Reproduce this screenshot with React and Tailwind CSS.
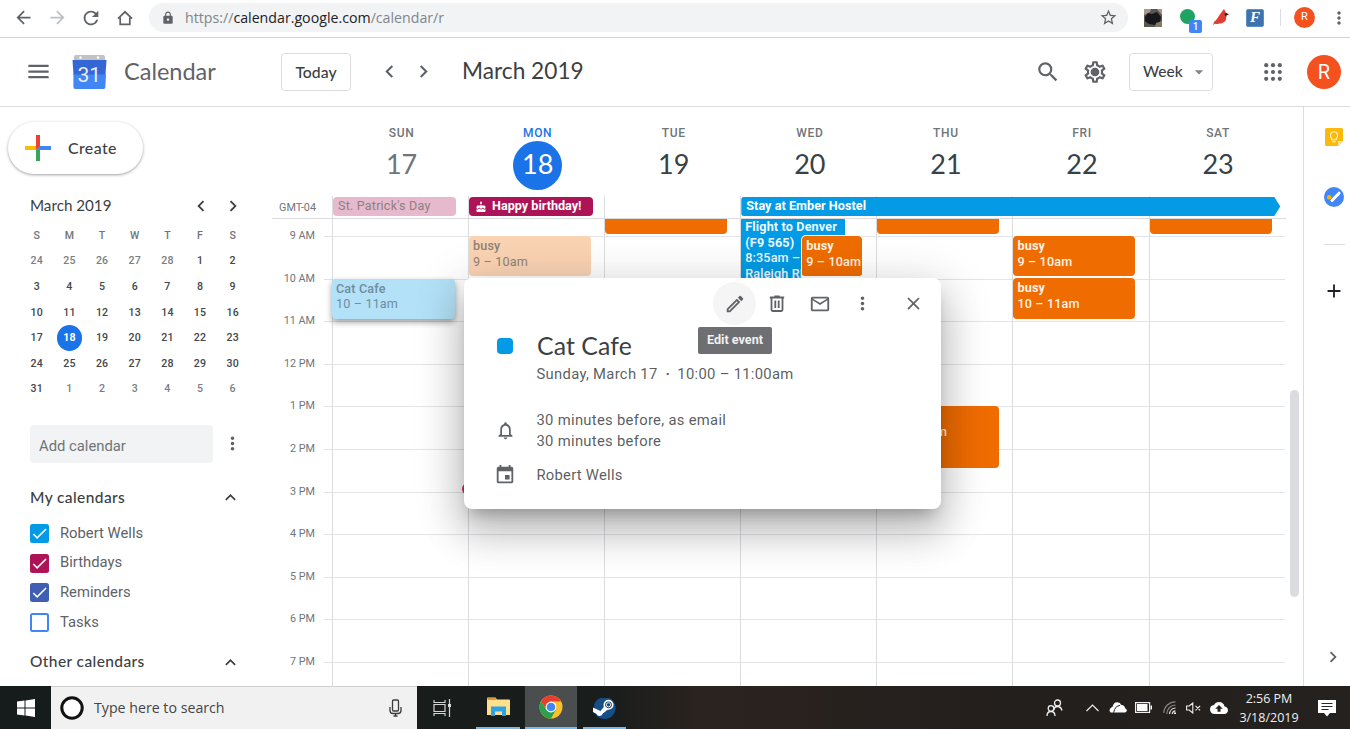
import React from "react";
import {
  MdAdd, MdArrowBack, MdArrowDropDown, MdArrowForward, MdCake, MdCheck,
  MdChevronLeft, MdChevronRight, MdClose, MdEvent, MdExpandLess, MdLock, MdMailOutline,
  MdMenu, MdMoreVert, MdNotificationsNone, MdOutlineModeEdit, MdOutlineSettings,
  MdRefresh, MdSearch, MdStarBorder, MdCloudUpload,
} from "react-icons/md";

const display = "font-['Lato',sans-serif]";
const system = "font-['Open_Sans','Noto_Sans',sans-serif]";

function Box({ w, children, className = "" }) {
  return <div className={`flex shrink-0 items-center justify-center ${w} ${className}`}>{children}</div>;
}

function BrowserBar() {
  return (
    <div className="flex h-[38px] shrink-0 items-start border-b border-[#cfd1d3] bg-white text-[#5f6368]">
      <div className="flex h-[35px] w-full items-center">
        <div className="w-[6px]" />
        <Box w="w-[34px]"><MdArrowBack size={21} /></Box>
        <Box w="w-[34px]" className="text-[#bdc1c6]"><MdArrowForward size={21} /></Box>
        <Box w="w-[34px]"><MdRefresh size={22} /></Box>
        <Box w="w-[34px]">
          <svg width="16" height="16" viewBox="0 0 16 16" fill="none" stroke="currentColor" strokeWidth="1.7">
            <path d="M1 8.6 8 1.8l7 6.8M3.2 7.4v7h9.6v-7" />
          </svg>
        </Box>
        <div className="ml-[7px] flex h-[29px] w-[979px] shrink-0 items-center rounded-full bg-[#f1f3f4]">
          <MdLock size={14} className="ml-3" />
          <div className={`ml-[10px] text-[14.200px] ${system} text-[#80868b]`}>
            https://<span className="text-[#202124]">calendar.google.com</span>/calendar/r
          </div>
          <MdStarBorder size={19} className="mr-[10px] ml-auto" />
        </div>
        <Box w="w-[50px]">
          <svg width="18" height="18" viewBox="0 0 18 18">
            <rect width="18" height="18" fill="#5c5650" />
            <path d="M0 0h7l-1 3-6 3zM13 0h5v6z" fill="#a79a8a" />
            <path d="M1 8 4 4l4 1 5-2 4 5-1 5-5 3-6-1-4-3z" fill="#16181b" />
            <path d="M12 14l6-2v6h-7z" fill="#85796a" />
          </svg>
        </Box>
        <div className="relative ml-[2px] h-[35px] w-[24px] shrink-0">
          <div className="mt-[9px] size-[15px] rounded-full bg-[#1da462]" />
          <div className="absolute top-[20px] left-[9px] flex h-[13px] w-[13px] items-center justify-center rounded-[2px] bg-[#4285f4] text-[10px] font-medium text-white">1</div>
        </div>
        <Box w="w-[34px]">
          <svg width="17" height="17" viewBox="0 0 17 17">
            <path d="M10 1.2 11 0l1.600 3.200 3.400 2.300-2.600 1-.5 4.600C11.600 14 6.500 15.500 2 14.800L0 16l1.200-3.400C4 11 5.800 6.500 10 1.200z" fill="#e23b30" />
            <path d="m11.300 4.800 2.200-.6 2 1.500-2.100.4-.3 2z" fill="#2a1a1a" />
          </svg>
        </Box>
        <Box w="w-[34px]">
          <div className="flex size-[18px] items-center justify-center rounded-[2px] border border-[#5f8fc0] bg-[#3d74ad] font-['Liberation_Serif',serif] text-[15px] font-bold text-white italic">F</div>
        </Box>
        <div className="ml-[8px] h-[17px] w-px shrink-0 bg-[#dadce0]" />
        <Box w="w-[47px]"><div className="flex size-[21px] items-center justify-center rounded-full bg-[#f4511e] text-[11px] text-white">R</div></Box>
        <Box w="w-[22px]"><MdMoreVert size={20} className="shrink-0" /></Box>
      </div>
    </div>
  );
}

function Header() {
  return (
    <div className="flex h-[69px] shrink-0 items-center border-b border-[#dadce0] pb-px text-[#5f6368]">
      <Box w="w-[76px]"><MdMenu size={27} /></Box>
      <svg className="-ml-[4px]" width="35" height="36" viewBox="0 0 35 36">
        <path d="M2 6V3a2 2 0 0 1 2-2h27a2 2 0 0 1 2 2v3z" fill="#c2c2c2" />
        <circle cx="8.500" cy="3.500" r="1.200" fill="#fff" /><circle cx="26" cy="3.500" r="1.200" fill="#fff" />
        <path d="M.5 6h34l-1 15h-32z" fill="#3367d6" />
        <path d="M1.400 20.500 34 20.500l-.6 12.500a2 2 0 0 1-2 2h-28a2 2 0 0 1-2-2z" fill="#4285f4" />
        <text x="17.300" y="27.500" textAnchor="middle" fontFamily="Roboto" fontSize="21" fill="#e8edf8">31</text>
      </svg>
      <div className={`ml-[17px] w-[157px] text-[23.500px] ${display}`}>Calendar</div>
      <div className={`flex h-[38px] w-[70px] shrink-0 items-center justify-center rounded-[4px] border border-[#dadce0] text-[15.800px] font-medium text-[#3c4043] ${display}`}>Today</div>
      <Box w="w-[34px]" className="ml-[21px]"><MdChevronLeft size={25} /></Box>
      <Box w="w-[34px]"><MdChevronRight size={25} /></Box>
      <div className={`ml-[22px] text-[22.700px] text-[#3c4043] ${display}`}>March 2019</div>
      <div className="grow" />
      <Box w="w-[47px]"><MdSearch size={26} /></Box>
      <Box w="w-[48px]">
        <svg width="26" height="26" viewBox="0 0 26 26">
          <MdOutlineSettings size={26} x="0" y="0" />
          <circle cx="13" cy="13" r="3.400" fill="currentColor" />
        </svg>
      </Box>
      <div className={`ml-[10px] flex h-[38px] w-[84px] items-center rounded-[4px] border border-[#dadce0] pl-[13px] text-[15.500px] font-medium text-[#3c4043] ${display}`}>
        Week<MdArrowDropDown size={20} className="mr-[3px] ml-auto text-[#80868b]" />
      </div>
      <Box w="w-[48px]" className="ml-[36px]">
        <svg width="18" height="18" viewBox="0 0 18 18" fill="currentColor">
          {[2.200, 9, 15.800].map((y) => [2.200, 9, 15.800].map((x) => <circle key={`${x}-${y}`} cx={x} cy={y} r="2.100" />))}
        </svg>
      </Box>
      <div className="mr-[9px] ml-[10px] flex size-[34px] items-center justify-center rounded-full bg-[#f4511e] text-[20px] text-white">R</div>
    </div>
  );
}

const miniDays = [
  24, 25, 26, 27, 28, 1, 2, 3, 4, 5, 6, 7, 8, 9, 10, 11, 12, 13, 14, 15, 16,
  17, 18, 19, 20, 21, 22, 23, 24, 25, 26, 27, 28, 29, 30, 31, 1, 2, 3, 4, 5, 6,
];

const calendars = [
  ["Robert Wells", "bg-[#039be5] border-[#039be5]", true],
  ["Birthdays", "bg-[#ad1457] border-[#ad1457]", true],
  ["Reminders", "bg-[#3f5fb5] border-[#3f5fb5]", true],
  ["Tasks", "bg-white border-[#4285f4]", false],
];

function Sidebar() {
  return (
    <div className="flex w-[272px] shrink-0 flex-col overflow-hidden">
      <div className={`mt-[15px] ml-2 flex h-[52px] w-[135px] shrink-0 items-center rounded-full bg-white pl-[17px] text-[15.900px] font-medium text-[#3c4043] shadow-[0_1px_2px_0_rgba(60,64,67,0.3),0_1px_3px_1px_rgba(60,64,67,0.15)] ${display}`}>
        <svg width="26" height="26" viewBox="0 0 26 26" className="mr-[17px]">
          <path d="M11 0h4v13h-4z" fill="#ea4335" /><path d="M11 15h4v11h-4z" fill="#34a853" />
          <path d="M0 11h11l4 0-4 4H0z" fill="#fbbc04" /><path d="M15 11h11v4H11z" fill="#4285f4" />
          <path d="M11 0h4v11l-4 4z" fill="#ea4335" />
        </svg>
        <span className="tracking-[0.400px]">Create</span>
      </div>
      <div className="mt-[18px] ml-[30px] flex h-[27px] shrink-0 items-center text-[#3c4043]">
        <div className={`w-[155px] text-[15.200px] ${display}`}>March 2019</div>
        <Box w="w-[32px]"><MdChevronLeft size={22} /></Box>
        <Box w="w-[32px]"><MdChevronRight size={22} /></Box>
      </div>
      <div className="mt-[4px] ml-[20.500px] grid w-[228.500px] shrink-0 grid-cols-7 text-center text-[10.600px] font-medium text-[#44474b]">
        {"SMTWTFS".split("").map((d, i) => <div key={i} className="flex h-[25.600px] items-center justify-center text-[#70757a]">{d}</div>)}
        {miniDays.map((d, i) => (
          <div key={i} className={`flex h-[25.600px] items-center justify-center tracking-[0.200px] ${i < 5 || i > 35 ? "text-[#7b8085]" : ""}`}>
            {i === 22 ? <span className="flex size-[25.400px] items-center justify-center rounded-full bg-[#1a73e8] font-bold text-white">18</span> : d}
          </div>
        ))}
      </div>
      <div className="mt-[22.700px] ml-[30px] flex h-[38px] shrink-0 items-center">
        <div className="flex h-full w-[183px] items-center rounded-[4px] bg-[#f1f3f4] pt-[5px] pl-[9px] text-[14.800px] text-[#70757a]">Add calendar</div>
        <Box w="w-[38px]" className="text-[#5f6368]"><MdMoreVert size={21} /></Box>
      </div>
      <div className={`mt-[20px] ml-[30px] flex h-[30px] shrink-0 items-center text-[15.500px] font-medium text-[#3c4043] ${display}`}>
        <span className="w-[190px] tracking-[0.400px]">My calendars</span><MdExpandLess size={21} />
      </div>
      <div className="mt-[5.500px] ml-[30px] shrink-0">
        {calendars.map(([name, color, on]) => (
          <div key={name} className="flex h-[29.800px] items-center text-[14.800px] text-[#5f6368]">
            <div className={`mr-[11px] flex size-[19px] items-center justify-center rounded-[2.500px] border-2 ${color}`}>
              {on && <MdCheck size={19} className="shrink-0 text-white" />}
            </div>
            <span className="-mt-px">{name}</span>
          </div>
        ))}
      </div>
      <div className={`mt-[9.500px] ml-[30px] flex h-[30px] shrink-0 items-center text-[15.500px] font-medium text-[#3c4043] ${display}`}>
        <span className="w-[190px] tracking-[0.400px]">Other calendars</span><MdExpandLess size={21} />
      </div>
    </div>
  );
}

const days = [["SUN", 17], ["MON", 18], ["TUE", 19], ["WED", 20], ["THU", 21], ["FRI", 22], ["SAT", 23]];
const hours = ["9 AM", "10 AM", "11 AM", "12 PM", "1 PM", "2 PM", "3 PM", "4 PM", "5 PM", "6 PM", "7 PM"];

function Event({ className, title, time, faded = false }) {
  return (
    <div className={`absolute overflow-hidden rounded-[4px] pt-[2px] pl-[4px] text-[12.600px] leading-[15.600px] tracking-[0.150px] whitespace-nowrap ${className}`}>
      <div className={faded ? "font-medium" : "font-bold"}>{title}</div>
      <div className={faded ? "font-normal" : "font-medium"}>{time}</div>
    </div>
  );
}

const orange = "bg-[#ef6c00] text-[#fff3e8]";

const events = {
  SUN: <Event faded className="top-[59.500px] left-[-1px] z-10 h-[40.500px] w-[123px] bg-[#b3e1f7] text-[#6f8da0] shadow-[0_3px_6px_rgba(0,0,0,0.4)]" title="Cat Cafe" time="10 – 11am" />,
  MON: (
    <>
      <Event faded className="top-[17px] left-0 h-[40px] w-[122px] bg-[#fad3b3] text-[#8f8176]" title="busy" time="9 – 10am" />
      <div className="absolute top-[264px] left-[-7px] size-[12px] rounded-full bg-[#db2455]" />
    </>
  ),
  TUE: <Event className={`-top-[21px] left-0 h-[35.500px] w-[122px] ${orange}`} />,
  WED: (
    <>
      <Event
        className="-top-[2px] left-0 h-[66px] w-[104px] bg-[#039be5] text-[#eef8fd]"
        title={<>Flight to Denver<br />(F9 565)</>}
        time={<>8:35am –<br />Raleigh RDU</>}
      />
      <Event className={`top-[16px] left-[60px] h-[44px] w-[62px] rounded-[5px] border border-b-[3px] border-white pl-[3.500px] ${orange}`} title="busy" time="9 – 10am" />
    </>
  ),
  THU: (
    <>
      <Event className={`-top-[21px] left-0 h-[35.500px] w-[122px] ${orange}`} />
      <Event className={`top-[187px] left-0 h-[61.500px] w-[122px] ${orange}`} title="busy" time="1 – 2:30pm" />
    </>
  ),
  FRI: (
    <>
      <Event className={`top-[17px] left-0 h-[40px] w-[122px] ${orange}`} title="busy" time="9 – 10am" />
      <Event className={`top-[59px] left-0 h-[41px] w-[122px] ${orange}`} title="busy" time="10 – 11am" />
    </>
  ),
  SAT: <Event className={`-top-[21px] left-0 h-[35.500px] w-[122px] ${orange}`} />,
};

function Week() {
  return (
    <div className="flex w-[1014px] shrink-0 flex-col overflow-hidden">
      <div className="flex h-[89px] shrink-0 pl-[61.500px]">
        {days.map(([d, n]) => (
          <div key={d} className="flex w-[136.100px] shrink-0 flex-col items-center pt-[17px]">
            <div className={`h-[17px] text-[12px] leading-[18px] font-medium tracking-[0.700px] ${n === 18 ? "text-[#1a73e8]" : "text-[#70757a]"}`}>{d}</div>
            <div className={`flex size-[49px] items-center justify-center rounded-full pb-[2px] text-[27px] ${display} ${n === 18 ? "bg-[#1a73e8] text-white" : n === 17 ? "text-[#70757a]" : "text-[#3c4043]"}`}>{n}</div>
          </div>
        ))}
      </div>
      <div className="flex h-[23px] shrink-0 border-b border-[#d8dadd]">
        <div className="w-[60px] shrink-0 pr-[16px] text-right text-[10.800px] leading-[23px] text-[#70757a]">GMT-04</div>
        {days.map(([d]) => (
          <div key={d} className="relative h-[22px] w-[136.100px] shrink-0 border-l border-[#dadce0]">
            {d === "SUN" && <div className="mt-px h-[19px] w-[123px] rounded-[4px] bg-[#e6b9cd] pl-[5px] text-[12.500px] leading-[18px] tracking-[0.220px] text-[#8d8082]">St. Patrick's Day</div>}
            {d === "MON" && (
              <div className="mt-px flex h-[19px] w-[124px] items-center rounded-[4px] bg-[#ad1457] pl-[6px] text-[12.600px] font-bold text-white">
                <MdCake size={12} className="mr-[5px]" />Happy birthday!
              </div>
            )}
            {d === "WED" && (
              <div className="absolute top-px left-0 z-10 h-[19px] w-[539px] rounded-l-[3px] bg-[#039be5] pl-[5px] text-[12.600px] leading-[18px] font-bold tracking-[0.050px] text-white [clip-path:polygon(0_0,calc(100%-6px)_0,100%_50%,calc(100%-6px)_100%,0_100%)]">Stay at Ember Hostel</div>
            )}
          </div>
        ))}
      </div>
      <div className="flex h-[467px] shrink-0 overflow-hidden">
        <div className="w-[60px] shrink-0">
          <div className="h-[17.300px]" />
          {hours.map((h) => (
            <div key={h} className="flex h-[42.550px] items-start">
              <div className="-mt-[8px] w-[43px] text-right text-[10.800px] leading-[16px] text-[#70757a]">{h}</div>
              <div className="ml-[9px] h-px grow bg-[#e0e2e5]" />
            </div>
          ))}
        </div>
        {days.map(([d]) => (
          <div key={d} className="relative w-[136.100px] shrink-0 border-l border-[#dadce0]">
            <div className="h-[17.300px]" />
            {hours.map((h) => <div key={h} className="h-[42.550px] border-t border-[#e2e4e7]" />)}
            {events[d]}
          </div>
        ))}
      </div>
    </div>
  );
}

function SidePanel() {
  return (
    <div className="flex w-[47px] shrink-0 flex-col items-center border-l border-[#dadce0] pl-[14px]">
      <svg className="mt-[21px]" width="18" height="18" viewBox="0 0 18 18">
        <path d="M1.500 0h15A1.500 1.500 0 0 1 18 1.500V13l-5 5H1.500A1.500 1.500 0 0 1 0 16.500v-15A1.500 1.500 0 0 1 1.500 0z" fill="#fbb90c" />
        <path d="M18 13h-5v5z" fill="#fde293" />
        <path d="M6.800 10.500C4.500 8.800 5 3.800 9 3.800s4.500 5 2.200 6.700v1.300H6.800zM7.200 13.600h3.600" fill="none" stroke="#fff3cf" strokeWidth="1.100" />
      </svg>
      <svg className="mt-[41px]" width="20" height="20" viewBox="0 0 20 20">
        <circle cx="10" cy="10" r="10" fill="#4285f4" />
        <circle cx="5.200" cy="10.300" r="2.300" fill="#f4b400" />
        <path d="m8 13.500 7-7.300" stroke="#fff" strokeWidth="3" strokeLinecap="round" />
      </svg>
      <div className="mt-[37px] h-px w-[21px] bg-[#dadce0]" />
      <MdAdd size={22} className="mt-[35px] text-[#202124]" />
      <MdChevronRight size={22} className="mt-auto mr-[2px] mb-[18px] text-[#5f6368]" />
    </div>
  );
}

function Popup() {
  return (
    <div className="absolute top-[278px] left-[464px] z-20 h-[231px] w-[477px] rounded-[8px] bg-white text-[#5f6368] shadow-[0_24px_38px_3px_rgba(0,0,0,0.17),0_9px_46px_8px_rgba(0,0,0,0.13),0_11px_15px_-7px_rgba(0,0,0,0.25)]">
      <div className="flex h-[51px] items-center pl-[249px]">
        <Box w="w-[43px]" className="h-[43px] rounded-full bg-[#f5f5f5]"><MdOutlineModeEdit size={22} /></Box>
        <Box w="w-[42px]">
          <svg width="16" height="18" viewBox="0 0 16 18" fill="none" stroke="currentColor" strokeWidth="1.800">
            <path d="M.8 2.500h14.400M5.300 1.400h5.400M2.500 3v11.800q0 1.200 1.200 1.200h8.600q1.200 0 1.200-1.200V3M6.300 5.500v7.500M9.700 5.500v7.500" />
          </svg>
        </Box>
        <Box w="w-[43px]"><MdMailOutline size={22} /></Box>
        <Box w="w-[43px]"><MdMoreVert size={21} /></Box>
        <Box w="w-[59px]"><MdClose size={21} /></Box>
      </div>
      <div className="absolute top-[49px] left-[234px] flex h-[27px] w-[74px] items-center justify-center rounded-[2px] bg-[#6d6f72] text-[12.600px] font-bold text-[#f1f1f1]">Edit event</div>
      <div className="flex h-[34px] items-center">
        <div className="mr-[24px] ml-[33px] size-[16px] rounded-[4px] bg-[#039be5]" />
        <div className={`text-[24.800px] tracking-[0.100px] text-[#3c4043] ${display}`}>Cat Cafe</div>
      </div>
      <div className="flex h-[22px] pl-[72.500px] text-[14.800px] leading-[22px] tracking-[0.300px] text-[#3c4043]/85">
        Sunday, March 17<b className="mr-[7px] ml-[8px]">·</b>10:00 – 11:00am
      </div>
      <div className="mt-[24.500px] flex items-center text-[14.800px] leading-[21.300px] tracking-[0.300px] text-[#3c4043]/85">
        <Box w="w-[34px]" className="mr-[14.500px] ml-[24px]"><MdNotificationsNone size={21} className="text-[#5f6368]" /></Box>
        <div>30 minutes before, as email<br />30 minutes before</div>
      </div>
      <div className="mt-[11.500px] flex items-center text-[14.800px] leading-[22px] tracking-[0.250px] text-[#3c4043]/85">
        <Box w="w-[34px]" className="mr-[14.500px] ml-[24px]"><MdEvent size={22} className="text-[#5f6368]" /></Box>
        <div>Robert Wells</div>
      </div>
    </div>
  );
}

function Taskbar() {
  return (
    <div className={`flex h-[43px] shrink-0 bg-[linear-gradient(90deg,#161c1b_0%,#191d1c_45%,#2b231f_52%,#231f1d_75%,#25211f_100%)] text-[#f0f0f0] ${system}`}>
      <Box w="w-[51px]">
        <svg width="18" height="18" viewBox="0 0 18 18" fill="#fff">
          <path d="M0 2.600 7.500 1.500v7H0zM8.500 1.400 18 0v8.500H8.500zM0 9.500h7.500v7L0 15.400zM8.500 9.500H18V18l-9.500-1.400z" />
        </svg>
      </Box>
      <div className="flex w-[366px] shrink-0 items-center border-t border-[#cfcfcf] bg-[#f1f1f1] pl-[9px] text-[#444]">
        <svg width="24" height="24" viewBox="0 0 24 24"><circle cx="12" cy="12" r="10.200" fill="#fff" stroke="#111" strokeWidth="3" /></svg>
        <div className="ml-[10px] text-[14.200px]">Type here to search</div>
        <svg className="mr-[15px] ml-auto" width="13" height="18" viewBox="0 0 13 18" fill="none" stroke="#3c3c3c" strokeWidth="1.300">
          <rect x="3.500" y="1" width="6" height="11" rx="1.200" /><path d="M1 8v3.500q0 3 3 3h5q3 0 3-3V8M6.500 14.500V17M4.500 17h4" />
        </svg>
      </div>
      <Box w="w-[51px]">
        <svg width="19" height="18" viewBox="0 0 19 18" fill="none" stroke="#d5d5d5" strokeWidth="1.200">
          <path d="M1 1v2.500h11V1M1 17v-2.500h11V17M1 5.500h11v7H1zM16.500 0v18" /><path d="M15 5h3v3h-3z" fill="#ddd" stroke="none" />
        </svg>
      </Box>
      <div className="ml-[8px] flex w-[44px] flex-col items-center">
        <div className="flex h-[41px] items-center">
          <svg width="23" height="20" viewBox="0 0 23 20">
            <path d="M0 1.500Q0 .5 1 .5h7.500L10 2.500h12q1 0 1 1V18H0z" fill="#ffe08a" /><path d="M.5 1h8L9.500 3H.5z" fill="#d99a3c" />
            <path d="M4 9.500h15v9.500h-4v-4.500H8V19H4z" fill="#2ba1e8" />
          </svg>
        </div>
        <div className="h-[2px] w-full bg-[#76b9ed]" />
      </div>
      <div className="ml-[5px] flex w-[52px] flex-col items-center bg-[#4a4e4f]">
        <div className="flex h-[41px] items-center">
          <svg width="24" height="24" viewBox="0 0 24 24">
            <circle cx="12" cy="12" r="11.500" fill="#fbc12d" />
            <path d="M2.040 6.250A11.500 11.500 0 0 1 22 6.500H12L7.400 14.700z" fill="#e5402f" />
            <path d="M2.040 6.250 7.200 14.700 12 17.500l4.800-2.800L12 23.500A11.500 11.500 0 0 1 2.040 6.250z" fill="#2aa14d" />
            <circle cx="12" cy="12" r="5.400" fill="#fff" /><circle cx="12" cy="12" r="4.300" fill="#4285f4" />
          </svg>
        </div>
        <div className="h-[2px] w-full bg-[#76b9ed]" />
      </div>
      <div className="ml-[6px] flex w-[43px] flex-col items-center">
        <div className="flex h-[41px] items-center">
          <svg className="mt-[4px]" width="24" height="22" viewBox="0 0 24 22">
            <path d="M1 7A11 11 0 1 1 3 17z" fill="#164e87" />
            <path d="m0 9.500 8 3.800 4.500-4.800L13 12l-3.200 3.500a3.300 3.300 0 0 1-6.300.5L0 14z" fill="#fff" />
            <circle cx="15.500" cy="6.800" r="4.200" fill="#17426f" stroke="#fff" strokeWidth="1.700" /><circle cx="15.500" cy="6.800" r="2.100" fill="none" stroke="#fff" strokeWidth=".9" />
            <path d="m11.500 8-4 5 3 2 5-4z" fill="#fff" />
          </svg>
        </div>
        <div className="h-[2px] w-full bg-[#76b9ed]" />
      </div>
      <div className="grow" />
      <Box w="w-[40px]">
        <svg width="17" height="18" viewBox="0 0 17 18" fill="none" stroke="#eee" strokeWidth="1.300">
          <circle cx="11.500" cy="4" r="3" /><path d="M8 11q0-3.500 3.500-3.500T16 11.500" /><circle cx="5" cy="9.500" r="2.800" /><path d="M1 17q0-4.500 4-4.500t4 4.500" />
        </svg>
      </Box>
      <Box w="w-[36px]"><svg width="13" height="8" viewBox="0 0 13 8" fill="none" stroke="#eee" strokeWidth="1.200"><path d="m.5 7 6-6 6 6" /></svg></Box>
      <Box w="w-[17px]" className="-ml-px">
        <svg className="shrink-0" width="18" height="11" viewBox="0 0 18 11">
          <path d="M1.500 10.500Q-.5 8 1.800 6q.7-1 1.700-1Q4.500 0 8.500.3q2.800.2 3.800 2.600Q16 3 16 6.200q2 .6 1.800 2.600-.3 1.700-2 1.700z" fill="#fff" />
          <path d="m4.600 10.700 1-3.200q1-3.500 5.500-4.300" fill="none" stroke="#292421" strokeWidth="1" />
        </svg>
      </Box>
      <Box w="w-[34px]">
        <svg width="17" height="11" viewBox="0 0 17 11"><rect x=".6" y=".6" width="14" height="9.800" fill="none" stroke="#eee" strokeWidth="1.200" /><path d="M2 2h10.500v7H2zM15.500 3.500H17v4h-1.500z" fill="#fff" /></svg>
      </Box>
      <Box w="w-[18px]">
        <svg width="13" height="13" viewBox="0 0 13 13" fill="none" strokeWidth="1.200">
          <path d="M.8 12A11.500 11.500 0 0 1 12.500.8M3.800 13A9 9 0 0 1 12.500 4" stroke="#858381" /><path d="M6.500 13A6.500 6.500 0 0 1 12.500 7M9.200 13A3.700 3.700 0 0 1 12.500 9.800" stroke="#ddd" /><circle cx="12" cy="12.200" r="1" fill="#fff" />
        </svg>
      </Box>
      <Box w="w-[30px]">
        <svg width="15" height="12" viewBox="0 0 15 12" fill="none" stroke="#eee" strokeWidth="1.100"><path d="M.6 4h2.600L6.800 1v10L3.200 8H.6zM9.500 3.800l4.600 4.600M14.100 3.800 9.500 8.400" /></svg>
      </Box>
      <Box w="w-[22px]"><MdCloudUpload size={18} className="shrink-0 text-white" /></Box>
      <div className="ml-[2px] flex w-[74px] shrink-0 flex-col items-center justify-center pt-[1px] text-[12.500px] leading-[19.500px]"><div>2:56 PM</div><div>3/18/2019</div></div>
      <Box w="w-[42px]">
        <svg width="18" height="18" viewBox="0 0 18 18"><path d="M0 1h18v13h-6l-3 3.500L6 14H0z" fill="#fff" /><path d="M3.500 4.500h11M3.500 7.500h11M3.500 10.500h7" stroke="#2a2624" strokeWidth="1.100" /></svg>
      </Box>
      <div className="w-[2px] shrink-0" />
    </div>
  );
}

export default function App() {
  return (
    <div className="relative flex h-[729px] w-[1350px] flex-col overflow-hidden bg-white font-['Roboto',sans-serif]">
      <BrowserBar />
      <Header />
      <div className="flex h-[579px] shrink-0 overflow-hidden">
        <Sidebar />
        <Week />
        <div className="w-[17px] shrink-0 pt-[283px] pl-[4px]"><div className="h-[207px] w-[9px] rounded-full bg-[#dadce0]" /></div>
        <SidePanel />
      </div>
      <Taskbar />
      <Popup />
    </div>
  );
}
